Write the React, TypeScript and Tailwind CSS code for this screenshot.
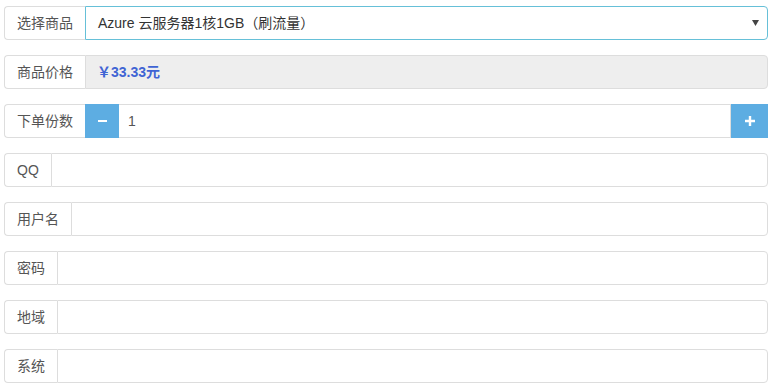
import React from "react";

const font = { fontFamily: '"Liberation Sans", "Noto Sans CJK SC", sans-serif' };

function Addon({ children }: { children: React.ReactNode }) {
  return (
    <div className="flex h-[34px] items-center whitespace-nowrap rounded-l-[4px] border border-r-0 border-[#ddd] bg-white px-[12px] text-[14px] text-[#555]">
      {children}
    </div>
  );
}

function TextRow({ label }: { label: string }) {
  return (
    <div className="flex h-[34px]">
      <Addon>{label}</Addon>
      <div className="h-[34px] flex-1 rounded-r-[4px] border border-[#ddd] bg-white" />
    </div>
  );
}

export default function App() {
  return (
    <div className="min-h-[392px] w-[781px] bg-white" style={font}>
      <div className="flex w-[768px] flex-col gap-[15px] pl-[4px] pt-[6px]">
        <div className="flex h-[34px]">
          <Addon>选择商品</Addon>
          <div className="relative flex h-[34px] flex-1 items-center rounded-r-[4px] border border-[#66c0d8] bg-white pl-[12px] text-[14px] text-[#333]">
            Azure 云服务器1核1GB（刷流量）
            <svg className="absolute right-[8px] top-[13px]" width="7" height="6" viewBox="0 0 7 6">
              <path d="M0 0 L7 0 L3.5 6 Z" fill="#444" />
            </svg>
          </div>
        </div>

        <div className="flex h-[34px]">
          <Addon>商品价格</Addon>
          <div className="flex h-[34px] flex-1 items-center rounded-r-[4px] border border-[#ddd] bg-[#eee] pl-[11px] text-[14px] font-bold text-[#3f64d4]">
            ￥33.33元
          </div>
        </div>

        <div className="flex h-[34px]">
          <Addon>下单份数</Addon>
          <div className="flex h-[34px] w-[34px] items-center justify-center bg-[#5dade2]">
            <div className="h-[2px] w-[9px] bg-white" />
          </div>
          <div className="flex h-[34px] flex-1 items-center border border-l-0 border-[#ddd] bg-white pl-[8px] text-[14px] text-[#555]">
            <span className="pl-[1px]">1</span>
          </div>
          <div className="flex h-[34px] w-[37px] items-center justify-center bg-[#5dade2]">
            <svg width="10" height="10" viewBox="0 0 10 10">
              <path d="M3.8 0 H6.2 V3.8 H10 V6.2 H6.2 V10 H3.8 V6.2 H0 V3.8 H3.8 Z" fill="white" />
            </svg>
          </div>
        </div>

        <TextRow label="QQ" />
        <TextRow label="用户名" />
        <TextRow label="密码" />
        <TextRow label="地域" />
        <TextRow label="系统" />
      </div>
    </div>
  );
}
